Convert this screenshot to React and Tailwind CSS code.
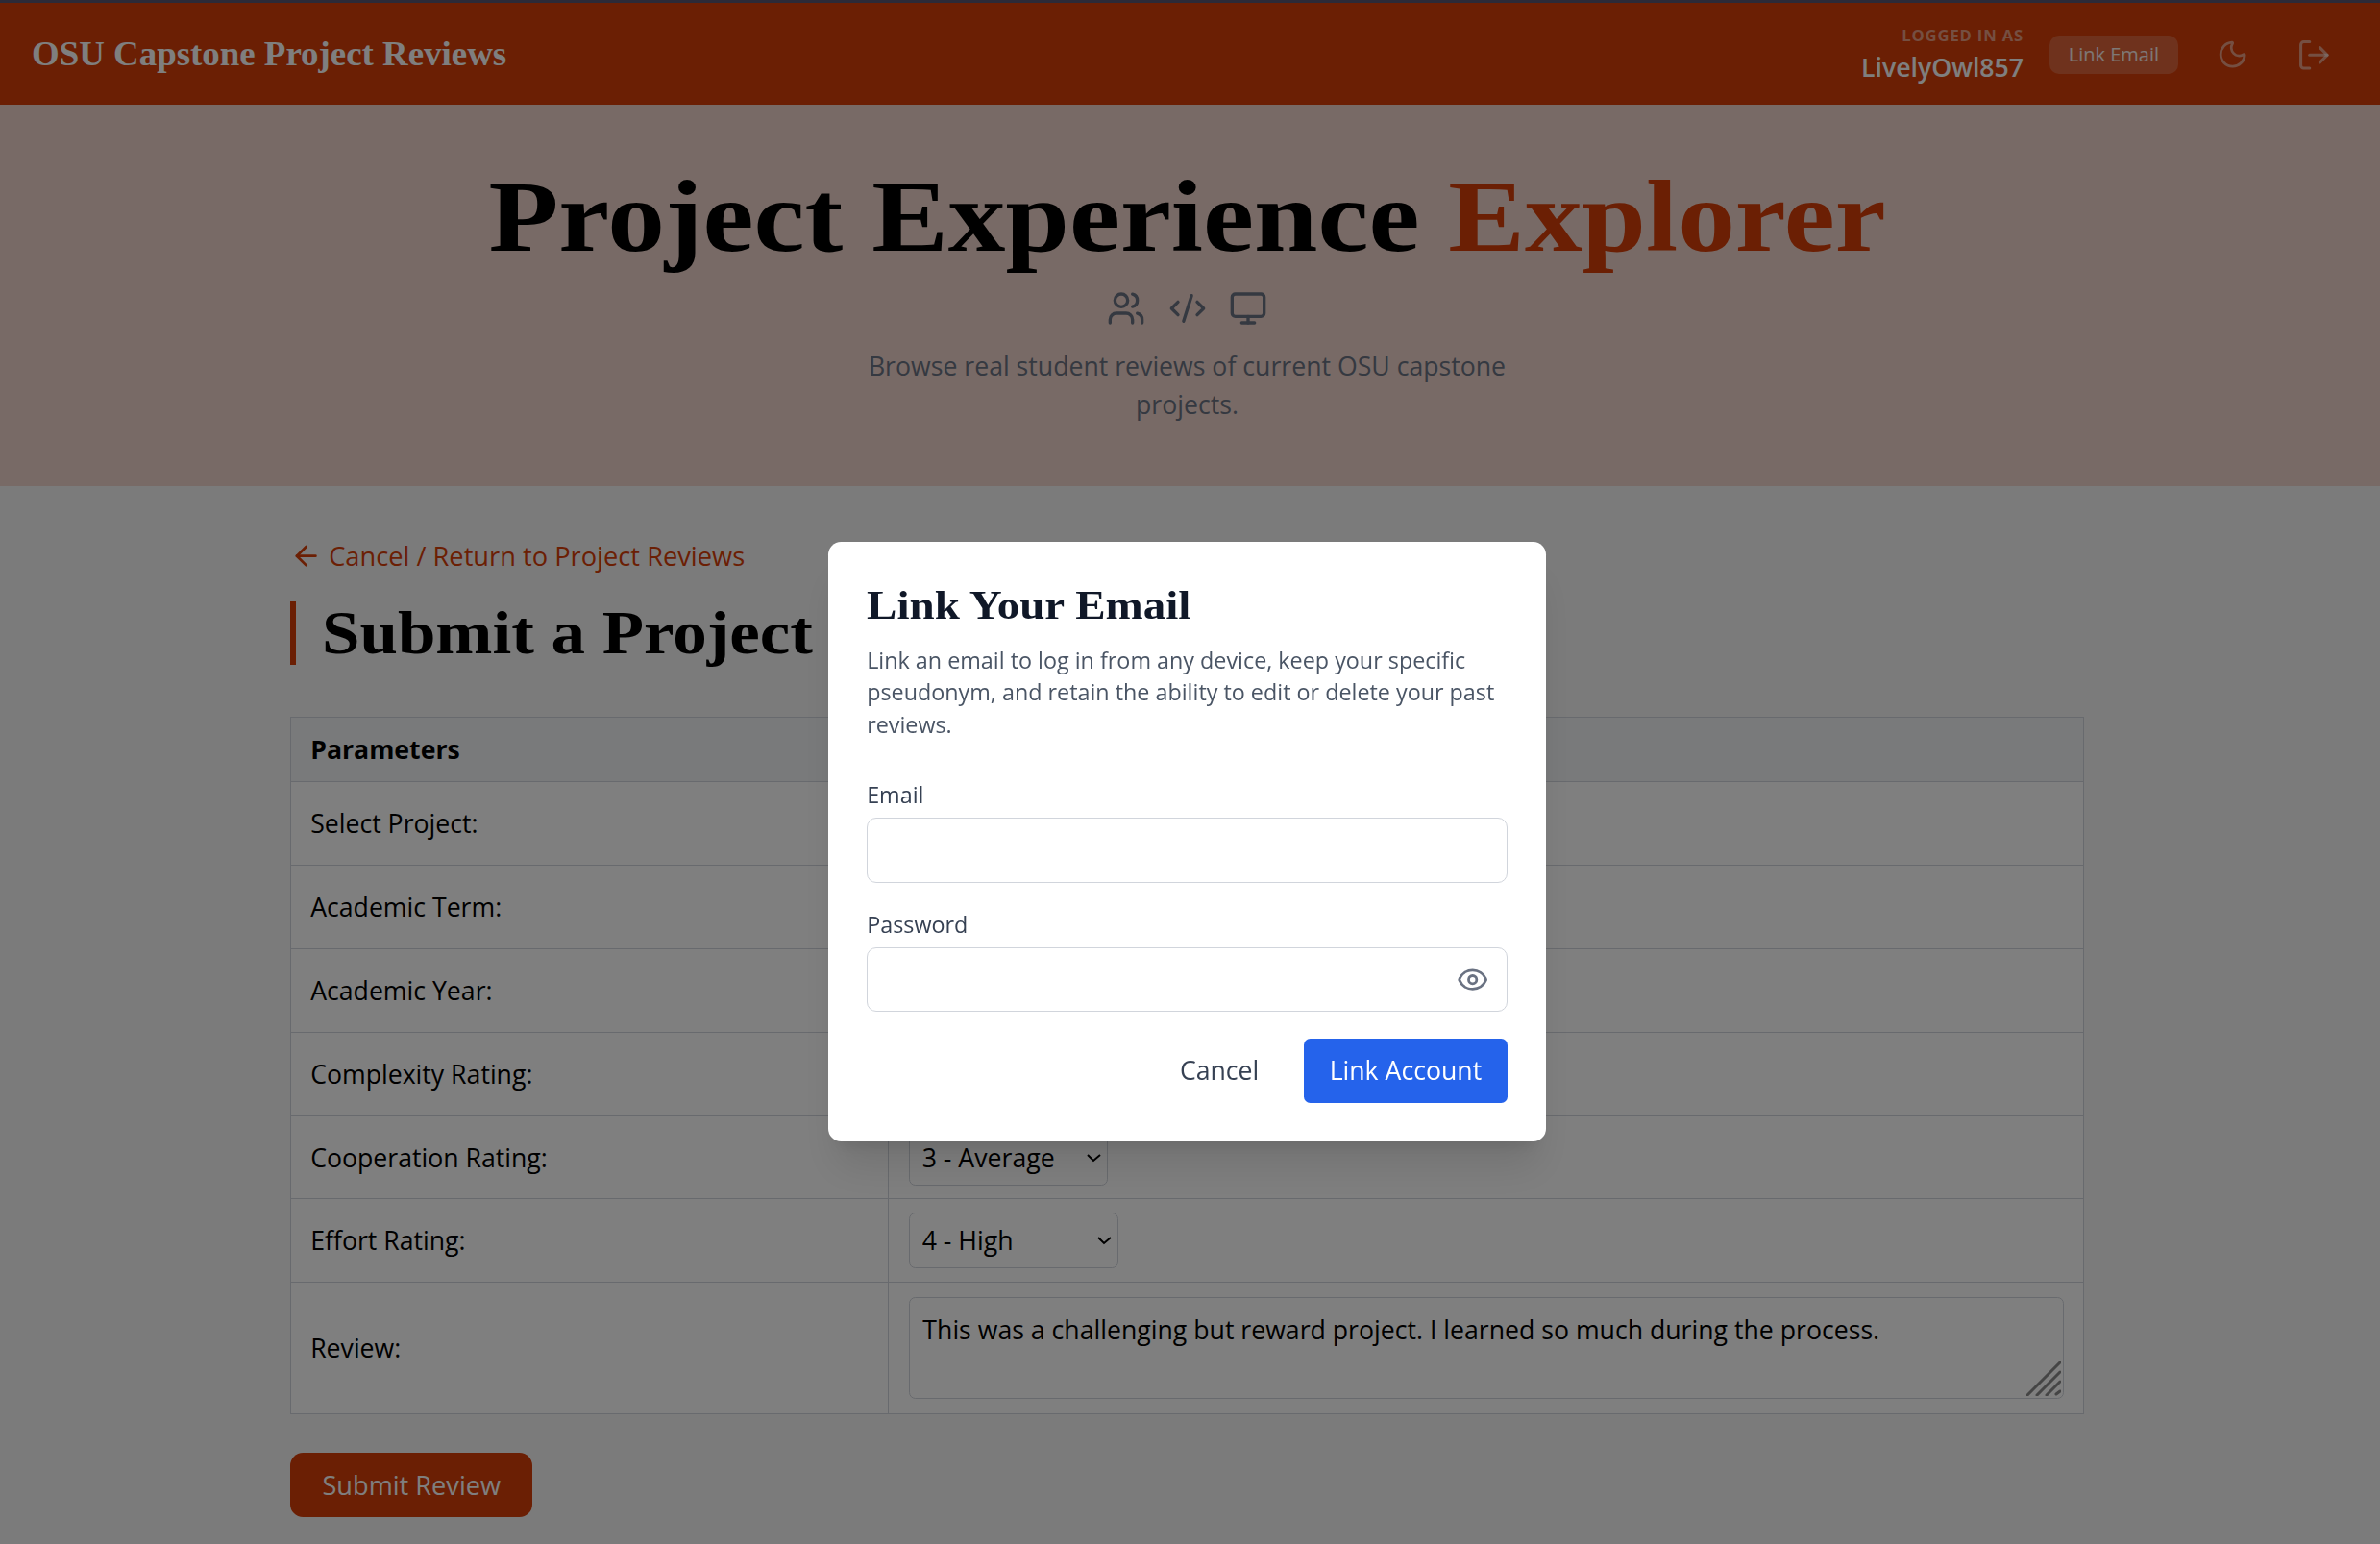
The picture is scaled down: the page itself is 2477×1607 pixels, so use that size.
import { ArrowLeft, Users, CodeXml, Monitor, Moon, LogOut, Eye } from 'lucide-react'

const serif = "font-['Liberation_Serif',Georgia,serif]"

const rows = [
  { label: 'Select Project:', width: 'w-[300px]', height: 'h-[52.3px]', options: [] },
  { label: 'Academic Term:', width: 'w-[124px]', height: 'h-[51.8px]', options: [] },
  { label: 'Academic Year:', width: 'w-[124px]', height: 'h-[52.3px]', options: [] },
  { label: 'Complexity Rating:', width: 'w-[130px]', height: 'h-[52.3px]', options: [] },
  { label: 'Cooperation Rating:', width: 'w-[124px]', height: 'h-[51.8px]', options: ['3 - Average'] },
  { label: 'Effort Rating:', width: 'w-[130.5px]', height: 'h-[51.8px]', options: ['4 - High'] },
]

function Header() {
  return (
    <nav className="h-[65.4px] border-t-2 border-[#585470] bg-[#d73f09] pt-[1.2px] pl-5 pr-6 flex items-center justify-between text-white">
      <span className={`${serif} inline-block origin-left scale-x-[1.054] text-[21px] font-bold`}>OSU Capstone Project Reviews</span>
      <div className="flex items-center gap-4">
        <div className="text-right">
          <div className="text-[10px] leading-4 font-bold uppercase tracking-wider text-white/50">Logged in as</div>
          <div className="text-base leading-6 font-semibold">LivelyOwl857</div>
        </div>
        <button className="px-3 py-1 text-xs rounded-md bg-white/20 text-white/90">Link Email</button>
        <button className="p-2 text-white/50"><Moon size={20} /></button>
        <button className="p-1.5 text-white/50"><LogOut size={22} /></button>
      </div>
    </nav>
  )
}

function Hero() {
  return (
    <section className="h-[238px] bg-[#f1d5cc] pt-10 pr-[3.6px] flex flex-col items-center">
      <h1 className={`${serif} inline-block scale-x-[1.137] text-[63px] leading-[60px] font-bold text-black mb-[15.4px]`}>
        Project Experience <span className="text-[#d73f09]">Explorer</span>
      </h1>
      <div className="flex gap-3.5 text-gray-500 mb-3">
        <Users size={24} />
        <CodeXml size={24} />
        <Monitor size={24} />
      </div>
      <p className="max-w-md text-center text-base text-gray-500">
        Browse real student reviews of current OSU capstone projects.
      </p>
    </section>
  )
}

function ReviewForm() {
  return (
    <div className="pr-[3.6px]">
      <main className="max-w-[1120px] mx-auto py-8">
        <a className="flex items-center gap-1 mb-4 text-[16.35px] leading-6 font-medium text-[#d73f09]">
          <ArrowLeft size={20} />
          <span>Cancel / Return to Project Reviews</span>
        </a>
        <h2 className="border-l-4 border-[#d73f09] pl-4 mb-8">
          <span className={`${serif} inline-block origin-left scale-x-[1.12] text-[38px] leading-10 font-bold text-black`}>
            Submit a Project
          </span>
        </h2>
        <table className="w-full border-collapse bg-white border border-gray-300 text-black">
          <thead>
            <tr className="bg-gray-100 h-[40.6px]">
              <th className="px-3 text-left font-bold border border-gray-300" colSpan={2}>Parameters</th>
            </tr>
          </thead>
          <tbody>
            {rows.map((row) => (
              <tr key={row.label} className={row.height}>
                <td className="w-1/3 px-3 py-2 border border-gray-300">{row.label}</td>
                <td className="pl-[12.6px] pr-3 py-2 border border-gray-300">
                  <select className={`${row.width} h-[35px] block px-1 border border-gray-300 rounded bg-white text-black`}>
                    {row.options.map((o) => <option key={o}>{o}</option>)}
                  </select>
                </td>
              </tr>
            ))}
            <tr>
              <td className="w-1/3 px-3 py-2 border border-gray-300">Review:</td>
              <td className="pl-[12.6px] pr-3 py-[9px] border border-gray-300">
                <div className="relative">
                  <textarea
                    className="block w-full h-16 px-2 py-2 border border-gray-300 rounded bg-white text-black resize-none"
                    defaultValue="This was a challenging but reward project. I learned so much during the process."
                  />
                  {/* resize grip, the native one doesn't scale with zoom */}
                  <svg viewBox="0 0 36 36" className="absolute right-[2px] bottom-[2px] w-[21.6px] h-[21.6px]" stroke="#8a8a8a" strokeWidth="3" strokeLinecap="round">
                    <path d="M1 35 L35 1" />
                    <path d="M11 35 L35 11" />
                    <path d="M21 35 L35 21" />
                    <path d="M31 34 L35 31" />
                  </svg>
                </div>
              </td>
            </tr>
          </tbody>
        </table>
        <button className="mt-6 px-5 py-2 rounded-lg bg-[#d73f09] text-[16.3px] leading-6 font-medium text-white">Submit Review</button>
      </main>
    </div>
  )
}

function LinkEmailModal() {
  return (
    <div className="fixed inset-0 bg-black/50 flex justify-center items-start pt-[338.6px] pr-[3.6px]">
      <div className="w-[448px] bg-white rounded-lg p-6 shadow-xl">
        <h3 className={`${serif} origin-left scale-x-[1.13] text-[25px] leading-8 font-bold text-gray-900 mb-2`}>Link Your Email</h3>
        <p className="text-sm text-gray-600 mb-6">
          Link an email to log in from any device, keep your specific pseudonym, and retain the ability to edit or delete your past reviews.
        </p>
        <label className="block text-sm font-medium text-gray-700 mb-1">Email</label>
        <input type="email" className="block w-full h-[41px] px-3 border border-gray-300 rounded-md mb-4" />
        <label className="block text-sm font-medium text-gray-700 mb-1">Password</label>
        <div className="relative mb-[17px]">
          <input type="password" className="block w-full h-10 px-3 pr-10 border border-gray-300 rounded-md" />
          <Eye size={20} className="absolute right-3 top-2.5 text-gray-500" />
        </div>
        <div className="flex justify-end gap-3">
          <button className="px-4 py-2 text-gray-700">Cancel</button>
          <button className="px-4 py-2 rounded bg-[#2563eb] text-white">Link Account</button>
        </div>
      </div>
    </div>
  )
}

export default function App() {
  return (
    <div className="[zoom:1.6667] h-[964px] overflow-hidden bg-[#f7f7f7] font-['Open_Sans','Noto_Sans',sans-serif]">
      <Header />
      <Hero />
      <ReviewForm />
      <LinkEmailModal />
    </div>
  )
}
